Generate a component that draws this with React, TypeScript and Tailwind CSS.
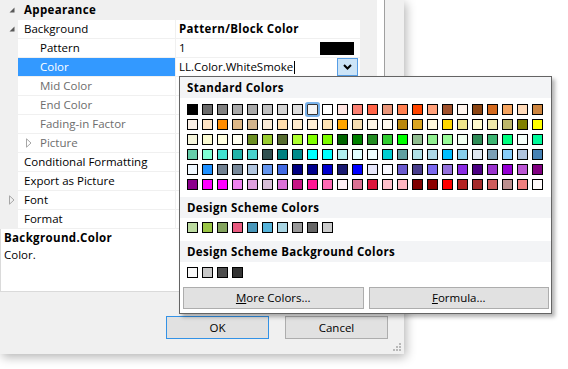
import type { ReactNode } from "react";

const standardColors = [
  ["#000000", "#696969", "#808080", "#a9a9a9", "#a9a9a9", "#c0c0c0", "#d3d3d3", "#dcdcdc", "#f5f5f5", "#ffffff", "#ffe4e1", "#fa8072", "#ff6347", "#e9967a", "#ff7f50", "#ff4500", "#ffa07a", "#a0522d", "#fff5ee", "#8b4513", "#d2691e", "#f4a460", "#ffdab9", "#cd853f"],
  ["#faf0e6", "#ffe4c4", "#ff8c00", "#deb887", "#d2b48c", "#faebd7", "#ffdead", "#ffebcd", "#ffefd5", "#ffe4b5", "#ffa500", "#f5deb3", "#fdf5e6", "#fffaf0", "#b8860b", "#daa520", "#fff8dc", "#ffd700", "#f0e68c", "#fffacd", "#eee8aa", "#bdb76b", "#808000", "#ffff00"],
  ["#f5f5dc", "#fafad2", "#ffffe0", "#fffff0", "#6b8e23", "#9acd32", "#556b2f", "#adff2f", "#7fff00", "#7cfc00", "#006400", "#008000", "#228b22", "#32cd32", "#00ff00", "#8fbc8f", "#90ee90", "#98fb98", "#f0fff0", "#2e8b57", "#3cb371", "#00ff7f", "#f5fffa", "#00fa9a"],
  ["#66cdaa", "#7fffd4", "#40e0d0", "#20b2aa", "#48d1cc", "#2f4f4f", "#008080", "#008b8b", "#00ffff", "#00ffff", "#afeeee", "#e0ffff", "#f0ffff", "#00ced1", "#5f9ea0", "#b0e0e6", "#add8e6", "#00bfff", "#87ceeb", "#dfe7ef", "#7b9fb5", "#87cefa", "#b0c4de", "#4682b4"],
  ["#f0f8ff", "#1e90ff", "#708090", "#778899", "#b0c4de", "#6495ed", "#4169e1", "#000080", "#00008b", "#0000cd", "#191970", "#0000ff", "#e6e6fa", "#f8f8ff", "#6a5acd", "#483d8b", "#7b68ee", "#9370db", "#8a2be2", "#4b0082", "#9932cc", "#9400d3", "#ba55d3", "#800080"],
  ["#8b008b", "#ff00ff", "#ff00ff", "#ee82ee", "#dda0dd", "#d8bfd8", "#da70d6", "#c71585", "#ff1493", "#ff69b4", "#fff0f5", "#db7093", "#dc143c", "#ffc0cb", "#ffb6c1", "#800000", "#8b0000", "#ff0000", "#b22222", "#a52a2a", "#cd5c5c", "#bc8f8f", "#f08080", "#fffafa"],
];

const schemeColors = ["#bcdba0", "#9ac545", "#83a35d", "#e85a7f", "#4896b9", "#56b3da", "#a9d5e3", "#999999", "#666666", "#cccccc"];
const schemeBackgrounds = ["#f8f8f8", "#c8c8c8", "#4d4d4d", "#333333"];

const bold = "font-bold tracking-[0.35px]";

function OpenArrow() {
  return (
    <svg width="6" height="6" viewBox="0 0 6 6" aria-hidden="true">
      <polygon points="5.5,0.5 5.5,5.5 0.5,5.5" fill="#595959" />
    </svg>
  );
}

function ClosedArrow() {
  return (
    <svg width="6" height="10" viewBox="0 0 6 10" aria-hidden="true">
      <path d="M0.5 0.8 L5 5 L0.5 9.2 Z" fill="none" stroke="#a6a6a6" strokeWidth="1" />
    </svg>
  );
}

type Row = {
  label: string;
  level: 0 | 1;
  expander?: "open" | "closed";
  muted?: boolean;
  selected?: boolean;
  value?: ReactNode;
};

const rows: Row[] = [
  { label: "Background", level: 0, expander: "open", value: <span className={bold}>Pattern/Block Color</span> },
  {
    label: "Pattern",
    level: 1,
    value: (
      <div className="flex w-full items-center justify-between pr-[6px]">
        <span>1</span>
        <span className="h-[13px] w-[34px] bg-black" />
      </div>
    ),
  },
  {
    label: "Color",
    level: 1,
    selected: true,
    value: (
      <div className="flex h-full w-full items-center justify-between pr-[2px]">
        <span className="flex items-center">
          LL.Color.WhiteSmoke
          <span className="ml-px h-[13px] w-px bg-black" />
        </span>
        <span className="flex h-[18px] w-[21px] items-center justify-center border border-[#569de5] bg-[#cce4f7]">
          <svg width="9" height="6" viewBox="0 0 9 6" aria-hidden="true">
            <path d="M1 1 L4.5 4.5 L8 1" fill="none" stroke="#000" strokeWidth="2" />
          </svg>
        </span>
      </div>
    ),
  },
  { label: "Mid Color", level: 1, muted: true },
  { label: "End Color", level: 1, muted: true },
  { label: "Fading-in Factor", level: 1, muted: true },
  { label: "Picture", level: 1, muted: true, expander: "closed" },
  { label: "Conditional Formatting", level: 0 },
  { label: "Export as Picture", level: 0 },
  { label: "Font", level: 0, expander: "closed" },
  { label: "Format", level: 0 },
];

function GridRow({ row }: { row: Row }) {
  const nameClass = row.selected
    ? "bg-[#3399ff] text-white"
    : row.muted
      ? "bg-white text-[#6d6d6d]"
      : "bg-white text-black";
  return (
    <div className="flex h-[19px] border-b border-[#f0f0f0]">
      <div className="flex w-[18px] items-center bg-[#f0f0f0] pl-[9px]">
        {row.level === 0 && row.expander === "open" && <OpenArrow />}
        {row.level === 0 && row.expander === "closed" && <ClosedArrow />}
      </div>
      <div className={`flex w-[158px] items-center border-r border-[#f0f0f0] ${nameClass} ${row.level === 0 ? "pl-[6px]" : row.expander ? "pl-[8px]" : "pl-[22px]"}`}>
        {row.level === 1 && row.expander === "closed" && (
          <span className="flex w-[14px] items-center">
            <ClosedArrow />
          </span>
        )}
        {row.label}
      </div>
      <div className="flex flex-1 items-center bg-white pl-[3px]">{row.value}</div>
    </div>
  );
}

function Swatch({ color, selected }: { color: string; selected?: boolean }) {
  return (
    <div
      className={
        selected
          ? "h-[11px] w-[11px] rounded-[1px] border border-[#333] shadow-[0_0_0_2px_#7ab3ec]"
          : "h-[11px] w-[11px] border border-black"
      }
      style={{ backgroundColor: color }}
    />
  );
}

function Band({ children }: { children: ReactNode }) {
  return <div className={`flex h-[21px] items-center bg-[#f3f4f6] pl-[7px] ${bold}`}>{children}</div>;
}

function ColorPopup() {
  return (
    <div className="absolute left-[179px] top-[76px] flex h-[238px] w-[373px] flex-col border border-[#646464] bg-white shadow-[3px_3px_4px_rgba(0,0,0,0.3)]">
      <Band>Standard Colors</Band>
      <div className="mt-[6px] grid grid-cols-[repeat(24,11px)] gap-[4px] pl-[7px]">
        {standardColors.flatMap((line, r) =>
          line.map((c, i) => <Swatch key={`${r}-${i}`} color={c} selected={r === 0 && i === 8} />),
        )}
      </div>
      <div className="mt-[7px]">
        <Band>Design Scheme Colors</Band>
      </div>
      <div className="mt-[4px] flex gap-[4px] pl-[7px]">
        {schemeColors.map((c, i) => (
          <Swatch key={i} color={c} />
        ))}
      </div>
      <div className="mt-[8px]">
        <Band>Design Scheme Background Colors</Band>
      </div>
      <div className="mt-[5px] flex gap-[4px] pl-[7px]">
        {schemeBackgrounds.map((c, i) => (
          <Swatch key={i} color={c} />
        ))}
      </div>
      <div className="mt-[9px] flex gap-[5px] pl-[3px] pr-[2px]">
        <button type="button" className="flex h-[22px] flex-1 items-center justify-center border border-[#adadad] bg-[#e1e1e1]">
          <span>
            <span className="underline">M</span>ore Colors...
          </span>
        </button>
        <button type="button" className="flex h-[22px] flex-1 items-center justify-center border border-[#adadad] bg-[#e1e1e1]">
          <span>
            <span className="underline">F</span>ormula...
          </span>
        </button>
      </div>
    </div>
  );
}

export default function App() {
  return (
    <div className="relative h-[369px] w-[568px] overflow-hidden bg-white font-['Open_Sans','Liberation_Sans',sans-serif] text-[11.5px] text-black">
      <div className="absolute left-0 top-0 flex h-[354px] w-[404px] flex-col bg-[#f0f0f0] shadow-[2px_3px_10px_rgba(0,0,0,0.3)]">
        <div className="flex h-[292px]">
          <div className="flex w-[360px] flex-col">
            <div className="flex h-[20px] items-center bg-[#f0f0f0]">
              <span className="w-[24px] pl-[9px]">
                <OpenArrow />
              </span>
              <span className={bold}>Appearance</span>
            </div>
            {rows.map((r) => (
              <GridRow key={r.label} row={r} />
            ))}
            <div className="flex-1 border-b border-l border-[#dadada] bg-white px-[3px] leading-[17px]">
              <div className={bold}>Background.Color</div>
              <div>Color.</div>
            </div>
          </div>
          <div className="w-[17px]" />
          <div className="w-[7px] bg-white" />
          <div className="w-px bg-[#a0a0a0]" />
        </div>
        <div className="flex justify-end gap-[16px] pr-[16px] pt-[24px]">
          <button type="button" className="h-[23px] w-[103px] border border-[#3392e6] bg-[#e1e1e1]">
            OK
          </button>
          <button type="button" className="h-[23px] w-[103px] border border-[#adadad] bg-[#e1e1e1]">
            Cancel
          </button>
        </div>
        <svg className="absolute bottom-[3px] right-[3px]" width="8" height="8" viewBox="0 0 8 8" aria-hidden="true">
          <g fill="#b8b8b8">
            <rect x="6" y="0" width="2" height="2" />
            <rect x="3" y="3" width="2" height="2" />
            <rect x="6" y="3" width="2" height="2" />
            <rect x="0" y="6" width="2" height="2" />
            <rect x="3" y="6" width="2" height="2" />
            <rect x="6" y="6" width="2" height="2" />
          </g>
        </svg>
      </div>
      <ColorPopup />
    </div>
  );
}
